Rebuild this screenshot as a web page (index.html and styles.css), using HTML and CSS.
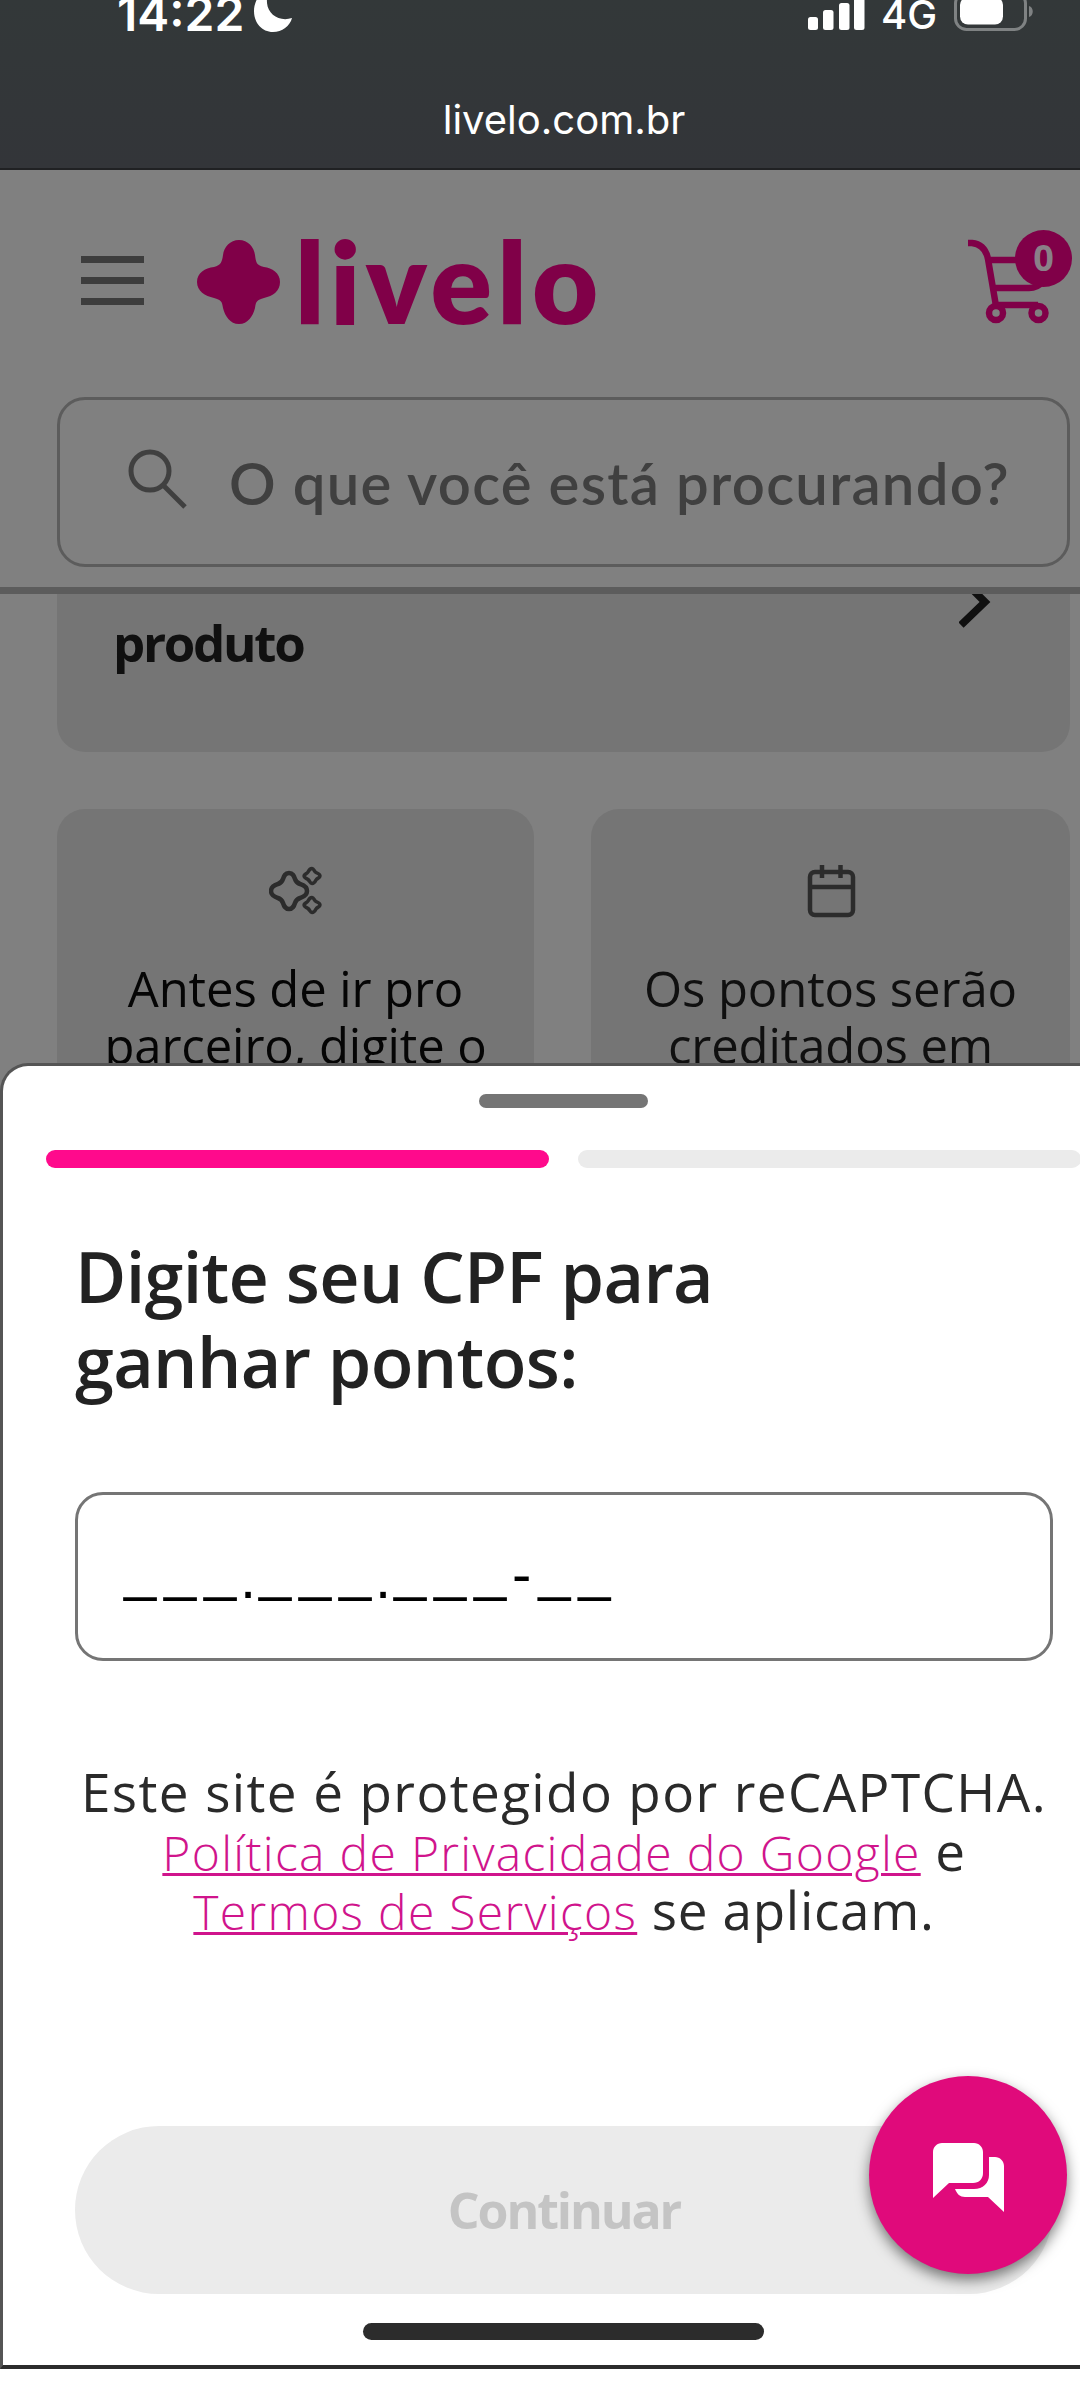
FILE: index.html
```html
<!DOCTYPE html>
<html lang="pt-BR">
<head>
    <meta charset="UTF-8">
    <meta name="viewport" content="width=device-width, initial-scale=1.0">
    <title>Livelo</title>
    <link rel="stylesheet" href="styles.css">
</head>
<body>
    <div class="browser-bar">
        <div class="status">
            <span class="clock">14:22</span>
            <svg class="moon" width="39" height="44" viewBox="0 0 39 44"><path d="M14 0C5 5 0 14 0 23c0 12 8 21 19 21 9 0 17-6 19-14-12 4-24-3-25-15-.3-6 0-11 1-15z" fill="#fff"/></svg>
            <svg class="signal" width="57" height="44" viewBox="0 0 57 44" fill="#fff">
                <rect x="0" y="31" width="10" height="13" rx="2.5"/>
                <rect x="15" y="24" width="10.5" height="20" rx="2.5"/>
                <rect x="31" y="17" width="10.5" height="27" rx="2.5"/>
                <rect x="46" y="8" width="10.5" height="36" rx="2.5"/>
            </svg>
            <span class="network">4G</span>
            <svg class="battery" width="80" height="40" viewBox="0 0 80 40">
                <rect x="1.5" y="1.5" width="70" height="37" rx="11" fill="none" stroke="#7f8283" stroke-width="3"/>
                <rect x="6" y="6" width="43" height="27.5" rx="8" fill="#fff"/>
                <path d="M75 15c5 1 5 10 0 11z" fill="#7f8283"/>
            </svg>
        </div>
        <div class="url">livelo.com.br</div>
    </div>

    <header class="header">
        <div class="top-row">
            <div class="menu"><i></i><i></i><i></i></div>
            <div class="logo">
                <svg width="84" height="84" viewBox="0 0 84 84"><path d="M42 0C51 0 57 7 58 15c1 7 1 10 9 12 8 1 16 6 16 15s-7 14-16 16c-7 2-8 3-9 10-2 8-7 16-16 16s-14-8-16-16c-1-7-2-8-9-10C8 56 0 51 0 42s8-14 17-15c7-2 8-5 9-12C27 7 33 0 42 0z" fill="#800048"/></svg>
                <span class="logo-name">livelo</span>
            </div>
            <div class="cart">
                <svg width="86" height="86" viewBox="0 0 86 86" fill="none" stroke="#800048" stroke-width="6.5">
                    <path d="M0 5h4c9 1 14 6 16 16l8 47M20 22h36M27 50h34c6 0 10-2 13-6M29 67h41"/>
                    <circle cx="28" cy="75" r="7"/>
                    <circle cx="70.5" cy="75" r="7"/>
                </svg>
                <span class="badge">0</span>
            </div>
        </div>
        <div class="search">
            <svg width="60" height="60" viewBox="0 0 60 60" fill="none" stroke="#404040" stroke-width="5">
                <circle cx="22" cy="22" r="19"/>
                <path d="M35 36l22 22"/>
            </svg>
            <span>O que você está procurando?</span>
        </div>
    </header>

    <main class="content">
        <div class="product">
            <span>produto</span>
            <svg width="32" height="34" viewBox="0 0 32 34"><path d="M12-6l14 14L2 31" fill="none" stroke="#101010" stroke-width="7.5"/></svg>
        </div>
        <div class="cards">
            <div class="card">
                <svg width="54" height="54" viewBox="0 0 54 54" fill="none" stroke="#2c2c2c">
                    <path stroke-width="4.5" d="M20 9c4 0 5 3 6 6s2 4 5 5 7 2 7 7-4 6-7 7-4 2-5 5-2 6-6 6-5-3-6-6-2-4-5-5-7-2-7-7 4-6 7-7 4-2 5-5 2-6 6-6z"/>
                    <path stroke-width="3.5" d="M43 4.500c2 0 2 3 4 4s4 1.500 4 3.500-3 2-4 4-2 3.500-4 3.500-2-2.500-4-4-4-1.500-4-3.500 3-2 4-4 2-3.500 4-3.500zM43 33.500c2 0 2 3 4 4s4 1.500 4 3.500-3 2-4 4-2 3.500-4 3.500-2-2.500-4-4-4-1.500-4-3.500 3-2 4-4 2-3.500 4-3.500z"/>
                </svg>
                <p class="dark">Antes de ir pro<br>parceiro, digite o</p>
            </div>
            <div class="card">
                <svg width="54" height="54" viewBox="0 0 54 54" fill="none" stroke="#2c2c2c" stroke-width="4.5">
                    <rect x="6" y="8" width="43" height="43" rx="5"/>
                    <path d="M6 23h43M18 1v13M36.500 1v13"/>
                </svg>
                <p>Os pontos serão<br>creditados em</p>
            </div>
        </div>
    </main>

    <section class="sheet">
        <div class="handle"></div>
        <div class="progress">
            <div class="step active"></div>
            <div class="step"></div>
        </div>
        <h1>Digite seu CPF para<br>ganhar pontos:</h1>
        <div class="cpf"><span class="digits">___</span><span class="dot">.</span><span class="digits">___</span><span class="dot">.</span><span class="digits">___</span><span class="dash">-</span><span class="digits">__</span></div>
        <p class="captcha">
            <span class="captcha-line first">Este site é protegido por reCAPTCHA.</span>
            <span class="captcha-line"><a class="link">Política de Privacidade do Google</a> e</span>
            <span class="captcha-line"><a class="link">Termos de Serviços</a> se aplicam.</span>
        </p>
        <div class="continue">Continuar</div>
        <div class="home"></div>
    </section>

    <div class="chat">
        <svg width="72" height="70" viewBox="0 0 72 70" fill="#fff">
            <path d="M9 0h32c5 0 9 4 9 9v21c0 6-4 10-10 10H16L0 55V9c0-5 4-9 9-9z"/>
            <path d="M56 14h6c5 0 9 4 9 9v46L55 54H32c-5 0-8-3-10-8h19c9 0 15-6 15-14z"/>
        </svg>
    </div>
</body>
</html>
```
FILE: styles.css
```css
* {
    box-sizing: border-box;
}
body {
    margin: 0;
    position: relative;
    width: 1080px;
    height: 2400px;
    overflow: hidden;
    background-color: #fff;
    font-family: "Open Sans", "Noto Sans", sans-serif;
}
.browser-bar {
    height: 170px;
    background: linear-gradient(#333839, #333539);
    border-bottom: 2px solid #202123;
    color: white;
    font-family: Inter, sans-serif;
}
.status {
    display: flex;
    align-items: flex-end;
    height: 32px;
    padding-left: 117px;
}
.clock {
    width: 126px;
    font-size: 48px;
    font-weight: 600;
    line-height: 32px;
    margin-bottom: 2px;
}
.moon {
    margin-left: 11px;
}
.signal {
    margin-left: 515px;
    margin-bottom: 2px;
}
.network {
    width: 56px;
    margin-left: 16px;
    font-size: 40px;
    font-weight: 500;
    line-height: 32px;
    margin-bottom: 1px;
}
.battery {
    margin-left: 17px;
    margin-bottom: 1px;
}
.url {
    margin-top: 64px;
    padding-left: 48px;
    font-size: 40px;
    line-height: 48px;
    text-align: center;
}
.header {
    height: 424px;
    background-color: #808080;
    border-bottom: 7px solid #5c5c5c;
    padding: 60px 10px 0 57px;
}
.top-row {
    display: flex;
    height: 93px;
    padding-left: 24px;
}
.menu {
    display: flex;
    flex-direction: column;
    gap: 14px;
    width: 63px;
    padding-top: 26px;
}
.menu i {
    height: 7px;
    background-color: #3d3d3d;
}
.logo {
    display: flex;
    margin-left: 53px;
    padding-top: 10px;
}
.logo-name {
    margin-left: 14px;
    color: #800048;
    font-family: Lato, sans-serif;
    font-size: 114px;
    font-weight: 800;
    line-height: 80px;
    letter-spacing: 5.3px;
}
.cart {
    position: relative;
    margin-left: auto;
    width: 102px;
    padding-top: 8px;
}
.badge {
    position: absolute;
    top: 0;
    right: -2px;
    width: 57px;
    height: 57px;
    border-radius: 50%;
    background-color: #800048;
    color: #8a8088;
    font-size: 36px;
    font-weight: 700;
    line-height: 56px;
    text-align: center;
}
.search {
    display: flex;
    align-items: center;
    margin-top: 74px;
    height: 170px;
    border: 3px solid #5c5c5c;
    border-radius: 28px;
    padding-left: 68px;
    color: #404040;
    font-family: Lato, sans-serif;
    font-size: 58px;
    font-weight: 600;
    letter-spacing: 1.3px;
    white-space: nowrap;
}
.search svg {
    margin-top: -6px;
    margin-right: 41px;
}
.content {
    height: 500px;
    background-color: #808080;
    padding: 0 10px 0 57px;
    overflow: hidden;
}
.product {
    display: flex;
    justify-content: space-between;
    height: 158px;
    padding: 0 79px 0 56px;
    background-color: #757575;
    border-radius: 0 0 28px 28px;
    color: #101010;
    font-size: 51px;
    font-weight: 700;
    letter-spacing: -2.3px;
    line-height: 97px;
}
.cards {
    display: grid;
    grid-template-columns: 477px 479px;
    gap: 57px;
    margin-top: 57px;
}
.card {
    height: 340px;
    padding-top: 55px;
    background-color: #757575;
    border-radius: 28px;
    color: #101010;
    text-align: center;
}
.card svg {
    display: block;
    margin: 0 auto;
}
.card p {
    margin: 42px 0 0;
    font-size: 49px;
    line-height: 57px;
    letter-spacing: -0.1px;
}
.card .dark {
    color: #050505;
}
.sheet {
    position: absolute;
    left: 0;
    top: 1063px;
    width: 1080px;
    height: 1306px;
    background-color: #fff;
    border: 3px solid #555;
    border-bottom: 4px solid #2c2c2c;
    border-right: none;
    border-radius: 28px 0 0 0;
}
.handle {
    width: 169px;
    height: 14px;
    margin: 28px 0 0 476px;
    border-radius: 7px;
    background-color: #757575;
}
.progress {
    display: grid;
    grid-template-columns: 503px 503px;
    gap: 29px;
    margin: 42px 0 0 43px;
}
.step {
    height: 18px;
    border-radius: 9px;
    background-color: #ebebeb;
}
.step.active {
    background-color: #ff0a8c;
}
h1 {
    margin: 66px 0 0 72px;
    color: #222;
    font-size: 70px;
    font-weight: 600;
    line-height: 85px;
    letter-spacing: -0.65px;
}
.cpf {
    width: 978px;
    height: 169px;
    margin: 88px 0 0 72px;
    padding: 43px 0 0 46px;
    border: 3px solid #757575;
    border-radius: 28px;
    font-family: "Liberation Sans", sans-serif;
    font-size: 58px;
    line-height: 80px;
}
.digits {
    letter-spacing: 7.7px;
    line-height: 0;
    vertical-align: 8px;
}
.dot {
    margin: 0 3px 0 -4px;
}
.dash {
    line-height: 0;
    padding-right: 7px;
    margin-left: -2px;
    vertical-align: 4px;
}
.captcha {
    width: 978px;
    margin: 101px 0 0 72px;
    color: #2a2a2a;
    font-size: 53px;
    font-weight: 400;
    letter-spacing: 0.7px;
    text-align: center;
}
.captcha-line {
    display: block;
    height: 59px;
    line-height: 59px;
    white-space: nowrap;
}
.captcha .first {
    letter-spacing: 1.4px;
}
.captcha .link {
    color: #d0148c;
    font-size: 48px;
    font-weight: 300;
    line-height: 0;
    letter-spacing: 1.3px;
    text-decoration: underline;
    text-decoration-thickness: 3px;
}
.continue {
    width: 978px;
    height: 168px;
    margin: 187px 0 0 72px;
    border-radius: 84px;
    background-color: #ebebeb;
    color: #c4c4c4;
    font-size: 50px;
    font-weight: 700;
    line-height: 168px;
    letter-spacing: -2.1px;
    text-align: center;
}
.home {
    width: 401px;
    height: 17px;
    margin: 29px 0 0 360px;
    border-radius: 9px;
    background-color: #2c2c2c;
}
.chat {
    position: absolute;
    left: 869px;
    top: 2076px;
    display: flex;
    align-items: center;
    justify-content: center;
    width: 198px;
    height: 198px;
    padding: 5px 0 0 2px;
    border-radius: 50%;
    background-color: #e00a7b;
    box-shadow: 0 6px 14px rgba(0, 0, 0, 0.5);
}
```
